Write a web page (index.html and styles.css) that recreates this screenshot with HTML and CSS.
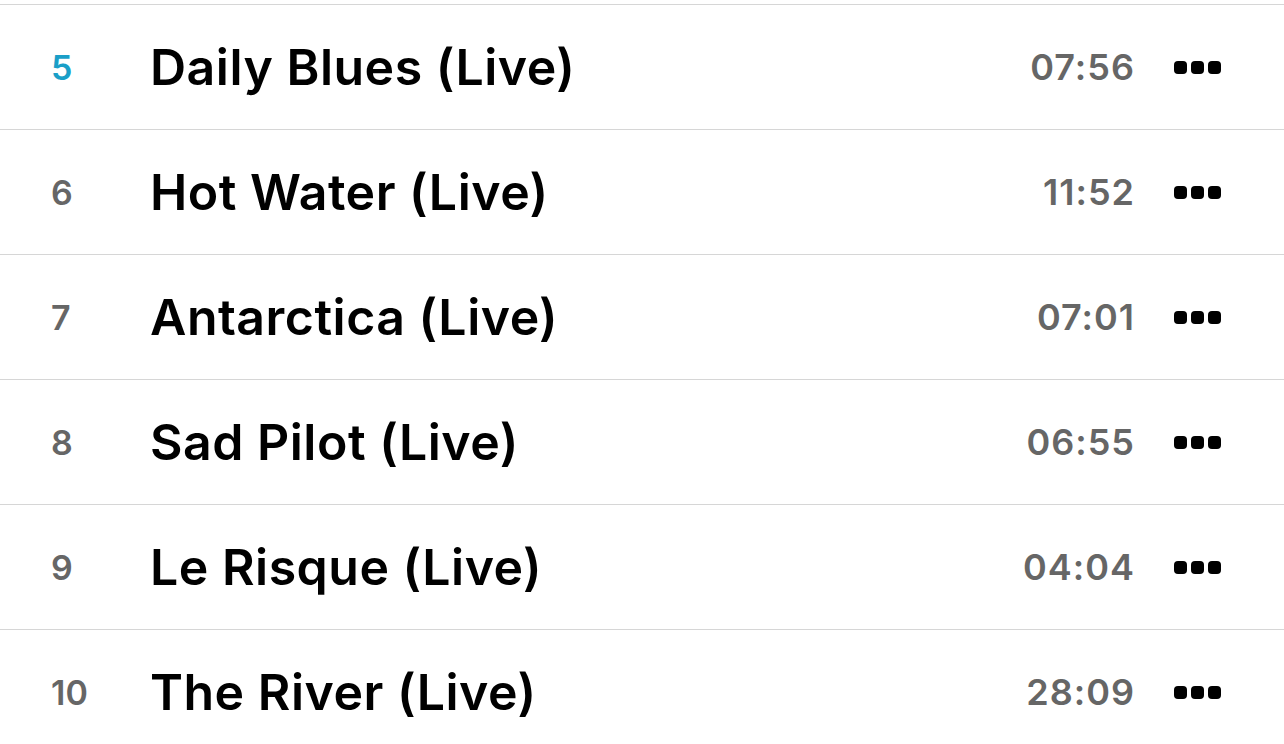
FILE: index.html
```html
<!DOCTYPE html>
<html>
<head>
<meta charset="utf-8">
<link rel="stylesheet" href="styles.css">
</head>
<body>
<ul class="tracks">
  <li class="track current"><span class="num">5</span><span class="title">Daily Blues (Live)</span><span class="dur">07:56</span><span class="more"><i></i><i></i><i></i></span></li>
  <li class="track"><span class="num">6</span><span class="title">Hot Water (Live)</span><span class="dur">11:52</span><span class="more"><i></i><i></i><i></i></span></li>
  <li class="track"><span class="num">7</span><span class="title">Antarctica (Live)</span><span class="dur">07:01</span><span class="more"><i></i><i></i><i></i></span></li>
  <li class="track"><span class="num">8</span><span class="title">Sad Pilot (Live)</span><span class="dur">06:55</span><span class="more"><i></i><i></i><i></i></span></li>
  <li class="track"><span class="num">9</span><span class="title">Le Risque (Live)</span><span class="dur">04:04</span><span class="more"><i></i><i></i><i></i></span></li>
  <li class="track"><span class="num">10</span><span class="title">The River (Live)</span><span class="dur">28:09</span><span class="more"><i></i><i></i><i></i></span></li>
</ul>
</body>
</html>
```
FILE: styles.css
```css
html, body {
  margin: 0;
  padding: 0;
  background: #fff;
  font-family: Inter, "Noto Sans", sans-serif;
}
.tracks {
  list-style: none;
  margin: 4px 0 0;
  padding: 0;
}
.track {
  display: flex;
  align-items: center;
  height: 124px;
  border-top: 1px solid #d6d6d6;
  padding: 0 63px 0 51px;
}
.num {
  width: 99px;
  flex: none;
  font-size: 34px;
  font-weight: 600;
  color: #666;
}
.current .num {
  color: #1a9fc8;
}
.title {
  flex: 1;
  font-size: 50px;
  font-weight: 600;
  color: #000;
  letter-spacing: 0.5px;
}
.dur {
  font-size: 36px;
  font-weight: 600;
  color: #666;
  letter-spacing: 1px;
}
.more {
  display: flex;
  gap: 4px;
  margin-left: 39px;
}
.more i {
  width: 13px;
  height: 13px;
  border-radius: 4px;
  background: #000;
}
```
